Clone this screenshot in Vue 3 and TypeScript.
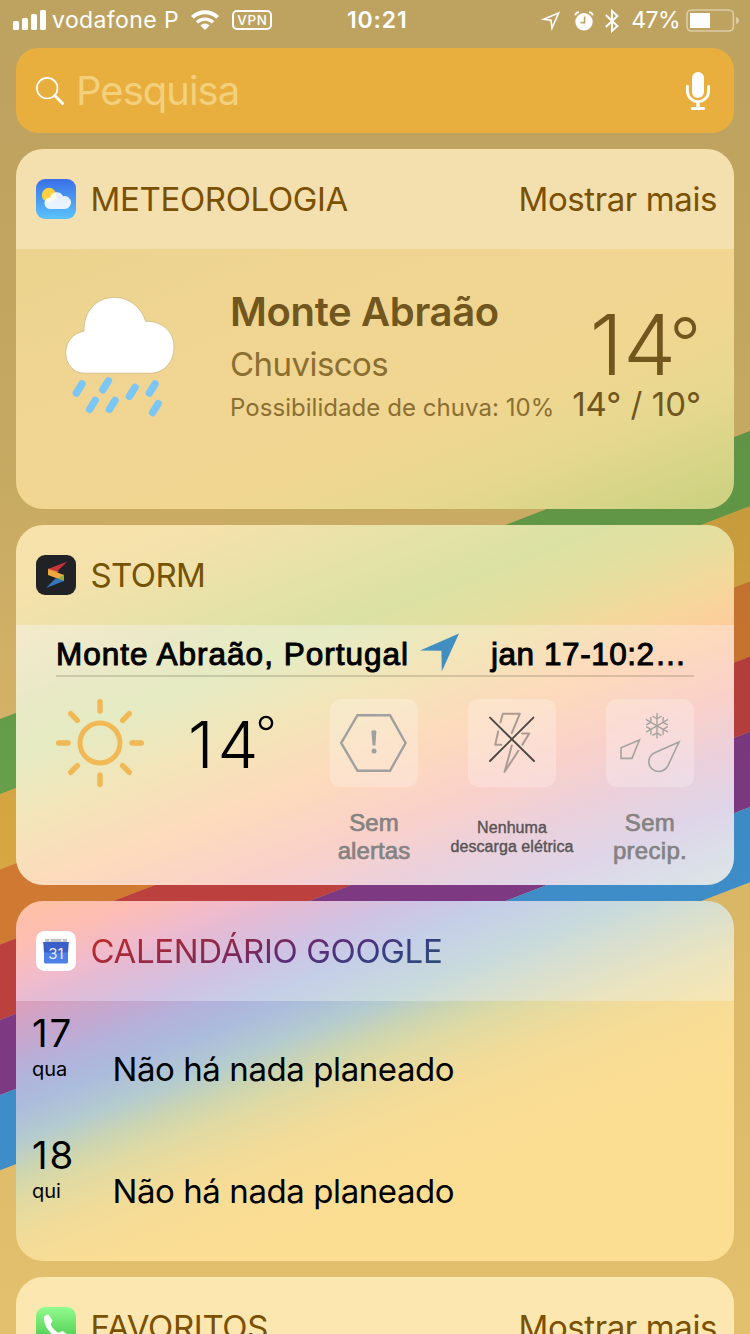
<script setup lang="ts">
interface Stripe { color: string; top: number }
interface Agenda { day: string; weekday: string; text: string }

const slope = 0.384
const stripeHeight = 75.2
const stripes: Stripe[] = ['#69a24c', '#d8a842', '#d07932', '#bb403e', '#7d3982', '#3e8dc8'].map((color, i) => ({
  color,
  top: 719 + i * stripeHeight,
}))

function stripePoints(top: number): string {
  const rise = slope * 750
  return `0,${top} 750,${top - rise} 750,${top - rise + stripeHeight} 0,${top + stripeHeight}`
}

const rays = [0, 45, 90, 135, 180, 225, 270, 315]
const arms = [0, 60, 120, 180, 240, 300]

const agenda: Agenda[] = [
  { day: '17', weekday: 'qua', text: 'Não há nada planeado' },
  { day: '18', weekday: 'qui', text: 'Não há nada planeado' },
]
</script>

<template>
  <main class="screen">
    <svg class="wallpaper" width="750" height="1334" viewBox="0 0 750 1334">
      <defs>
        <linearGradient id="shade" x1="0" y1="300" x2="0" y2="900" gradientUnits="userSpaceOnUse">
          <stop offset="0" stop-color="#000" stop-opacity="0.12" />
          <stop offset="1" stop-color="#000" stop-opacity="0" />
        </linearGradient>
      </defs>
      <polygon v-for="s in stripes" :key="s.color" :points="stripePoints(s.top)" :fill="s.color" />
      <polygon points="0,719 750,431 750,882 0,1170" fill="url(#shade)" />
    </svg>

    <header class="status">
      <div class="status-left">
        <svg width="34" height="20" viewBox="0 0 34 20" fill="#fff">
          <rect x="0" y="11" width="6" height="9" rx="1.6" />
          <rect x="9" y="8" width="6" height="12" rx="1.6" />
          <rect x="18" y="4" width="6" height="16" rx="1.6" />
          <rect x="27" y="0" width="6" height="20" rx="1.6" />
        </svg>
        <span class="carrier">vodafone P</span>
        <svg class="wifi" width="28" height="20" viewBox="0 0 28 20" fill="none" stroke="#fff">
          <path d="M1.4 7.4 A17.8 17.8 0 0 1 26.6 7.4" stroke-width="4" />
          <path d="M6 12.4 A11.4 11.4 0 0 1 22 12.4" stroke-width="3.4" />
          <path d="M14 20 L9.4 15.4 A6.6 6.6 0 0 1 18.6 15.4 Z" fill="#fff" stroke="none" />
        </svg>
        <span class="vpn">VPN</span>
      </div>
      <span class="clock">10:21</span>
      <div class="status-right">
        <svg width="20" height="20" viewBox="0 0 20 20" fill="none" stroke="#fff" stroke-width="1.6">
          <path d="M17.6 2 L2.6 8.3 L10 9.2 L11 17 Z" />
        </svg>
        <svg class="alarm" width="20" height="20" viewBox="0 0 20 20">
          <circle cx="10" cy="10.8" r="8.7" fill="#fff" />
          <path d="M1.2 4.2 Q2 1.4 5 1.2 M18.8 4.2 Q18 1.4 15 1.2" stroke="#fff" stroke-width="1.8" fill="none" />
          <path d="M10.6 5.6 V11.6 H6.6" stroke="#bea360" stroke-width="1.6" fill="none" />
        </svg>
        <svg class="bt" width="14" height="24" viewBox="0 0 14 24" fill="none" stroke="#fff" stroke-width="1.9">
          <path d="M0.8 6 L12.4 17 L7 22 V2 L12.4 7 L0.8 18" />
        </svg>
        <span class="percent">47%</span>
        <svg class="battery" width="54" height="23" viewBox="0 0 54 23">
          <rect x="1" y="1" width="46.4" height="21" rx="4.4" fill="none" stroke="#dccda8" stroke-width="1.6" />
          <rect x="4" y="4" width="20" height="15" fill="#fff" />
          <path d="M50 8 Q53 9 53 11.5 Q53 14 50 15 Z" fill="#dccda8" />
        </svg>
      </div>
    </header>

    <div class="search">
      <svg width="28" height="28" viewBox="0 0 28 28" fill="none" stroke="#fff">
        <circle cx="11.2" cy="11.2" r="10.3" stroke-width="1.7" />
        <path d="M18.6 18.6 L26.6 26.6" stroke-width="2.8" stroke-linecap="round" />
      </svg>
      <span class="placeholder">Pesquisa</span>
      <svg class="mic" width="24" height="38" viewBox="0 0 24 38" fill="none" stroke="#fff">
        <rect x="6" y="0" width="12" height="26" rx="6" fill="#fff" stroke="none" />
        <path d="M1.4 14.5 V19 A10.6 10.6 0 0 0 22.6 19 V14.5" stroke-width="2.8" stroke-linecap="round" />
        <path d="M12 30 V36" stroke-width="3.4" />
        <path d="M6.4 36.5 H17.6" stroke-width="3" stroke-linecap="round" />
      </svg>
    </div>

    <section class="card">
      <div class="head weather-head">
        <svg width="40" height="40" viewBox="0 0 40 40">
          <defs>
            <linearGradient id="sky" x1="0" y1="0" x2="0" y2="1">
              <stop offset="0" stop-color="#3a6fe8" />
              <stop offset="1" stop-color="#5ac3fa" />
            </linearGradient>
          </defs>
          <rect width="40" height="40" rx="9" fill="url(#sky)" />
          <circle cx="13" cy="16" r="7.2" fill="#fcd140" />
          <path d="M14.5 30 A5.8 5.8 0 0 1 14 18.4 A7 7 0 0 1 27 17.2 A6.5 6.5 0 1 1 28.6 30 Z" fill="#fff" fill-opacity="0.87" />
        </svg>
        <h2>METEOROLOGIA</h2>
        <span class="more">Mostrar mais</span>
      </div>
      <div class="weather">
        <svg class="rain" width="114" height="122" viewBox="64 296 114 122">
          <path d="M84 373.2 C73.6 373.2 65.8 364 65.8 352.6 C65.8 341 74 333 84 331.2 C83.4 311.8 96 297.4 114.4 297.4 C130 297.4 141.6 308 145.6 321.4 C160 320.6 174 330 174 347 C174 363 163 373.2 150 373.2 Z" fill="#fff" stroke="#cdb887" stroke-width="0.8" />
          <g stroke="#7cc6f5" stroke-width="7.4" stroke-linecap="round">
            <path d="M76.4 393 L82 384" />
            <path d="M102.8 389.8 L108.4 380.8" />
            <path d="M129.4 396.4 L135 387.4" />
            <path d="M149.4 393 L155 384" />
            <path d="M89.6 409.4 L95.2 400.4" />
            <path d="M109.4 409.4 L115 400.4" />
            <path d="M152.6 412.6 L158.2 403.6" />
          </g>
        </svg>
        <div class="place">
          <strong>Monte Abraão</strong>
          <span class="cond">Chuviscos</span>
          <span class="chance">Possibilidade de chuva: 10%</span>
        </div>
        <div class="temps">
          <span class="now">14<span class="degree">°</span></span>
          <span class="range">14° / 10°</span>
        </div>
      </div>
    </section>

    <section class="card">
      <div class="head storm-head">
        <svg width="40" height="40" viewBox="0 0 40 40">
          <rect width="40" height="40" rx="9" fill="#202226" />
          <path d="M31.4 6.6 L12 14 L20 17.6 Z" fill="#c8343a" />
          <path d="M12 13.6 L23 16.6 L16 20 Z" fill="#e0653a" />
          <path d="M12 14 L28 20 V26 L12 20 Z" fill="#f0a83f" />
          <path d="M28 19.4 V26 L22 23.6 Z" fill="#8fb04a" />
          <path d="M10 33 L20 23 L28 26 Z" fill="#3577bd" />
        </svg>
        <h2 class="storm-name">STORM</h2>
      </div>
      <div class="storm">
        <div class="storm-title">
          <span class="city">Monte Abraão, Portugal</span>
          <svg width="40" height="39" viewBox="0 0 40 39"><path d="M39 0.5 L0 17.6 L21.4 17.8 L21.8 38.5 Z" fill="#418fc0" /></svg>
          <span class="stamp">jan 17-10:2…</span>
        </div>
        <div class="storm-grid">
          <svg width="88" height="88" viewBox="-44 -44 88 88" fill="none" stroke="#f0b956">
            <circle r="20" stroke-width="5" />
            <path v-for="r in rays" :key="r" d="M0 -32 V-41.4" stroke-width="5.4" stroke-linecap="round" :transform="`rotate(${r})`" />
          </svg>
          <div class="storm-temp"><span>14</span><svg width="16" height="16" viewBox="0 0 16 16"><circle cx="8" cy="8" r="6.1" fill="none" stroke="#000" stroke-width="2.4" /></svg></div>
          <div class="tile">
            <svg width="88" height="88" viewBox="0 0 88 88" fill="none" stroke="#a0a0a0" stroke-width="2.4">
              <path d="M27.5 16.2 H60 L75.6 44 L60 71.8 H27.5 L11.2 44 Z" />
              <path d="M41.4 32.6 Q41.6 31.2 44 31.2 Q46.4 31.2 46.4 32.6 L45.4 46.6 H42.6 Z" fill="#a0a0a0" stroke="none" />
              <circle cx="44" cy="52" r="2.5" fill="#a0a0a0" stroke="none" />
            </svg>
            <p class="label">Sem<br />alertas</p>
          </div>
          <div class="tile">
            <svg width="88" height="88" viewBox="0 0 88 88" fill="none" stroke-linejoin="round" stroke-linecap="round">
              <path d="M32.4 23.4 L34.8 14.8 H51.8 L43.8 34 M30.2 32.4 L27.2 45.8 H33.4 M54 34.6 H61.2 L54.4 45.6 M43.8 46.4 L36.6 72.8 L50.4 51.8" stroke="#ab9b95" stroke-width="2" />
              <path d="M22 18.6 L66 62 M65.4 18.6 L22 62" stroke="#4c4845" stroke-width="1.9" />
            </svg>
            <p class="label small">Nenhuma<br />descarga elétrica</p>
          </div>
          <div class="tile">
            <svg width="88" height="88" viewBox="0 0 88 88" fill="none" stroke="#a5a3a2" stroke-width="1.6">
              <path v-for="a in arms" :key="a" d="M0 0 V-12.8 M-4.6 -9.8 L0 -7 L4.6 -9.8" :transform="`translate(51 26.8) rotate(${a})`" stroke-width="1.4" />
              <path d="M33.4 41 L15 48.8 V59.4 H26 Z" />
              <path d="M73 43 L48.2 54 C41 58 41.6 67 47 70.6 C53 74.6 59.6 71.4 62 66.6 Z" />
            </svg>
            <p class="label precip">Sem<br />precip.</p>
          </div>
        </div>
      </div>
    </section>

    <section class="card">
      <div class="head cal-head">
        <svg width="40" height="40" viewBox="0 0 40 40">
          <rect width="40" height="40" rx="8.5" fill="#fff" />
          <path d="M9 8 H31 V13 H9 Z" fill="#c3c3c5" />
          <circle cx="14" cy="9.6" r="1" fill="#fff" /><circle cx="26" cy="9.6" r="1" fill="#fff" />
          <path d="M7.2 11 H32.8 L32 22 H8 Z" fill="#3a5fc8" />
          <path d="M8 21.6 H32 V31 Q32 32.4 30.6 32.4 H9.4 Q8 32.4 8 31 Z" fill="#4d7fe8" />
          <text x="20" y="27.6" text-anchor="middle" class="cal-num">31</text>
        </svg>
        <h2 class="rainbow">CALENDÁRIO GOOGLE</h2>
      </div>
      <div class="calendar">
        <div v-for="item in agenda" :key="item.day" class="day">
          <div class="date">
            <span class="num">{{ item.day }}</span>
            <span class="weekday">{{ item.weekday }}</span>
          </div>
          <span class="event">{{ item.text }}</span>
        </div>
      </div>
    </section>

    <section class="card">
      <div class="head fav-head">
        <svg width="40" height="40" viewBox="0 0 40 40">
          <defs>
            <linearGradient id="phone" x1="0" y1="0" x2="0" y2="1">
              <stop offset="0" stop-color="#92fb8e" />
              <stop offset="1" stop-color="#3fc244" />
            </linearGradient>
          </defs>
          <rect width="40" height="40" rx="9" fill="url(#phone)" />
          <path d="M8 10 C9 8 11.4 7 12.6 7.6 L16.4 13.6 C16.6 15 14.8 16 14.8 17.4 C16 20.4 19.4 24.4 22.6 25.6 C24 25.8 25 24 26.6 24 L32.4 28 C33 30 31.6 31.6 29.6 32.6 C20 34 7 21 8 10 Z" fill="#fff" />
        </svg>
        <h2>FAVORITOS</h2>
        <span class="more">Mostrar mais</span>
      </div>
    </section>
  </main>
</template>

<style>
html,
body {
  margin: 0;
  overflow: hidden;
}
</style>

<style scoped>
.screen {
  position: relative;
  box-sizing: border-box;
  width: 750px;
  height: 1334px;
  overflow: hidden;
  padding: 0 16px;
  display: flex;
  flex-direction: column;
  background: linear-gradient(#bea25f 0, #bfa35f 180px, #c7aa62 480px, #d1b067 660px, #d9b767 890px, #e0be6c 1230px, #e2c06e 1334px);
  font-family: Inter, 'Liberation Sans', sans-serif;
  white-space: nowrap;
}
.screen > * {
  flex: none;
}
svg {
  display: block;
  flex: none;
}
.wallpaper {
  position: absolute;
  left: 0;
  top: 0;
}
.status,
.search,
.card {
  position: relative;
}

.status {
  height: 48px;
  margin: 0 -16px;
  color: #fff;
  font-size: 23px;
  line-height: 41px;
  display: grid;
  grid-template-columns: 1fr 64px 1fr;
}
.status-left,
.status-right {
  display: flex;
  align-items: center;
  height: 41px;
}
.status-left {
  padding-left: 13px;
}
.status-left > svg,
.vpn {
  margin-bottom: 1px;
}
.status-right {
  justify-content: flex-end;
  padding-right: 10px;
}
.carrier {
  width: 139px;
  margin-left: 5px;
  letter-spacing: 0.4px;
}
.vpn {
  box-sizing: border-box;
  width: 40px;
  height: 20px;
  margin-left: 13px;
  padding-left: 1px;
  border: 2px solid #fff;
  border-radius: 5px;
  text-align: center;
  font-size: 13.4px;
  line-height: 16.5px;
  font-weight: 500;
  letter-spacing: 0.7px;
}
.clock {
  font-weight: 600;
  text-align: left;
  padding-left: 4px;
  letter-spacing: 0.85px;
}
.alarm {
  margin-left: 12.5px;
}
.bt {
  margin-left: 11.5px;
}
.percent {
  margin-left: 12px;
  letter-spacing: -0.6px;
}
.battery {
  margin-left: 6px;
}

.search {
  height: 85px;
  margin-bottom: 16px;
  border-radius: 22px;
  background: #e8af3f;
  display: flex;
  align-items: center;
  padding: 0 24px 0 20px;
  box-sizing: border-box;
}
.placeholder {
  margin-left: 12px;
  font-size: 40px;
  letter-spacing: -1px;
  color: #f3d07c;
}
.mic {
  margin-left: auto;
}

.card {
  border-radius: 27px;
  overflow: hidden;
  margin-bottom: 16px;
}
.head {
  height: 100px;
  padding: 0 17px 0 20px;
  display: flex;
  align-items: center;
  color: #7a5102;
  font-size: 33px;
}
h2 {
  margin: 0 0 0 14.5px;
  font-size: 33px;
  font-weight: 400;
  letter-spacing: -0.35px;
}
.storm-name {
  letter-spacing: -0.6px;
}
.more {
  margin-left: auto;
  letter-spacing: -0.4px;
}
.weather-head {
  background: #f4dfae;
}
.weather {
  height: 260px;
  box-sizing: border-box;
  background: linear-gradient(159deg, #ebd38e 0, #efd591 28%, #f0d691 62%, #e7d88f 77%, #d3d485 92%, #ccd07f 100%);
  display: flex;
  color: #71561d;
}
.rain {
  margin: 47px 0 0 48px;
}
.place {
  display: flex;
  flex-direction: column;
  width: 330px;
  margin: 39px 0 0 52px;
}
.place strong {
  font-size: 40px;
  line-height: 48px;
  font-weight: 600;
  letter-spacing: -0.35px;
}
.cond {
  margin-top: 6px;
  font-size: 33px;
  line-height: 44px;
  letter-spacing: -0.55px;
  color: #8b6f31;
}
.chance {
  margin-top: 6px;
  font-size: 24px;
  line-height: 32px;
  letter-spacing: 0.05px;
  color: #8b6f31;
}
.temps {
  display: flex;
  flex-direction: column;
  align-items: flex-end;
  margin: 56px 33px 0 auto;
}
.now {
  font-size: 84px;
  line-height: 80px;
  height: 80px;
  font-weight: 275;
  letter-spacing: 0.5px;
}
.degree {
  font-size: 69px;
  line-height: 40px;
  font-weight: 300;
  letter-spacing: 0;
  margin-left: -7px;
  vertical-align: 8px;
}
.range {
  margin-top: -1px;
  font-size: 33px;
  line-height: 40px;
}

.storm-head {
  color: #745302;
  background: linear-gradient(159deg, #f8e2ac 0, #f5e1ab 20%, #e6e2a8 42%, #dbe1a3 60%, #e3df9f 73%, #f3d99b 86%, #ffcc9b 100%);
}
.storm {
  height: 260px;
  box-sizing: border-box;
  padding: 0 40px;
  font-family: 'Liberation Sans', Arial, sans-serif;
  background: linear-gradient(159deg, #f4eacc 0, #eae9c7 14%, #e5ebc3 24%, #f3e5b9 37%, #fddabc 51%, #fad1ca 64%, #ecd0da 74%, #dfd5e8 85%, #dbdfe9 93%, #dde5e3 100%);
}
.storm-title {
  display: flex;
  height: 50px;
  box-sizing: border-box;
  padding-top: 8px;
  box-shadow: 0 2px 0 rgba(90, 80, 60, 0.22);
  font-size: 31.5px;
  line-height: 42px;
  letter-spacing: 1px;
  color: #000;
  -webkit-text-stroke: 1px #000;
}
.city {
  width: 364px;
}
.stamp {
  margin-left: 31px;
  letter-spacing: 0.55px;
}
.storm-grid {
  display: grid;
  grid-template-columns: 88px 86px 88px 88px 88px;
  gap: 50px;
  margin-top: 24px;
}
.storm-temp {
  display: flex;
  margin-left: -6px;
  font: 320 65px/92px Inter, sans-serif;
  letter-spacing: 4px;
  color: #000;
}
.storm-temp svg {
  margin: 16px 0 0 -4px;
}
.tile {
  display: flex;
  flex-direction: column;
  align-items: center;
}
.tile > svg {
  border-radius: 11px;
  background: rgba(255, 255, 255, 0.24);
}
.label {
  margin: 22px -30px 0;
  font-size: 24px;
  line-height: 28px;
  text-align: center;
  letter-spacing: 0.1px;
  color: #858282;
  -webkit-text-stroke: 0.7px #858282;
}
.precip {
  letter-spacing: 0.3px;
}
.small {
  margin-top: 31px;
  font-size: 16px;
  line-height: 19px;
  letter-spacing: 0.06px;
  color: #585355;
  -webkit-text-stroke: 0.4px #585355;
}

.cal-head {
  background: linear-gradient(159deg, #ffc3a3 0, #fdbdb4 13%, #f0bbcc 23%, #e5bad3 28%, #d0c2e3 40%, #c5cee8 50%, #c8dadd 63%, #d8dfcf 73%, #ebe4be 86%, #f7e6b2 100%);
}
.rainbow {
  line-height: 40px;
  color: transparent;
  background: linear-gradient(159deg, #b82a2c 10%, #882850 40%, #5a2c78 60%, #343f80 80%, #2c5276 100%);
  -webkit-background-clip: text;
  background-clip: text;
}
.cal-num {
  font: 400 15px Inter, sans-serif;
  fill: #e6ecfa;
}
.calendar {
  height: 260px;
  background: linear-gradient(159deg, #dd9fb9 0, #c5a7cf 8%, #b3b2db 14%, #abbcdc 20%, #b4cbcf 26.5%, #ccd5b1 32%, #e0daa3 37%, #f2db98 45%, #fadd94 55%, #fcde92 68%, #fcde92 100%);
  color: #000;
}
.day {
  height: 122px;
  box-sizing: border-box;
  padding: 10px 0 0 16px;
  display: flex;
}
.date {
  width: 80.5px;
  display: flex;
  flex-direction: column;
}
.num {
  font-size: 38.5px;
  line-height: 44px;
  letter-spacing: 1.8px;
}
.weekday {
  margin-top: 1px;
  font-size: 20px;
  line-height: 26px;
}
.event {
  margin-top: 36px;
  font-size: 33px;
  line-height: 44px;
  letter-spacing: -0.42px;
}
.fav-head {
  background: #fde7b0;
}
</style>
